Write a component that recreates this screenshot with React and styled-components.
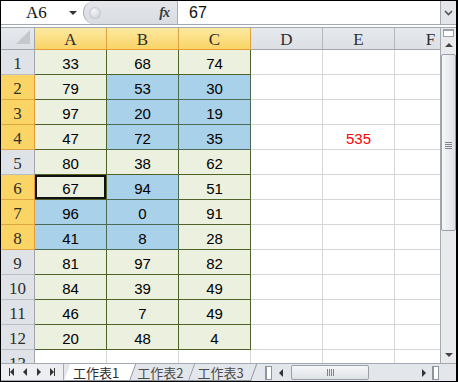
import React from "react";
import styled, { createGlobalStyle, css } from "styled-components";

const GlobalStyle = createGlobalStyle`
  html, body { margin: 0; padding: 0; background: #fff; }
  * { box-sizing: border-box; }
`;

const rows = [
  [33, 68, 74],
  [79, 53, 30],
  [97, 20, 19],
  [47, 72, 35],
  [80, 38, 62],
  [67, 94, 51],
  [96, 0, 91],
  [41, 8, 28],
  [81, 97, 82],
  [84, 39, 49],
  [46, 7, 49],
  [20, 48, 4],
];

const selectedRows = [2, 3, 4, 6, 7, 8];
const columns = ["A", "B", "C", "D", "E", "F"];

const isBlue = (r, c) =>
  (r >= 2 && r <= 4 && c >= 1 && c <= 2) ||
  (r >= 6 && r <= 8 && c <= 1 && !(r === 6 && c === 0));

export default function App() {
  return (
    <>
      <GlobalStyle />
      <Window>
        <FormulaBar>
          <NameBox>
            <NameText>A6</NameText>
            <DropTriangle />
          </NameBox>
          <FxBox>
            <Dimple />
            <Fx>fx</Fx>
          </FxBox>
          <FormulaInput>67</FormulaInput>
          <ExpandButton>
            <svg width="9" height="6" viewBox="0 0 9 6">
              <polyline points="1,1 4.5,4.5 8,1" fill="none" stroke="#555" strokeWidth="1.6" />
            </svg>
          </ExpandButton>
        </FormulaBar>
        <BarGap />
        <Main>
          <Sheet>
            <Grid>
              <CornerCell>
                <svg width="16" height="16" viewBox="0 0 16 16">
                  <polygon points="15,1 15,15 1,15" fill="#c4c8cd" />
                </svg>
              </CornerCell>
              {columns.map((col, i) => (
                <ColHead key={col} $selected={i < 3}>
                  {col}
                </ColHead>
              ))}
              {rows.map((vals, ri) => {
                const r = ri + 1;
                return (
                  <React.Fragment key={r}>
                    <RowHead $selected={selectedRows.includes(r)}>{r}</RowHead>
                    {columns.map((col, c) => {
                      const filled = c < 3;
                      return (
                        <Cell
                          key={col}
                          $tone={filled ? (isBlue(r, c) ? "blue" : "green") : "plain"}
                          $active={r === 6 && c === 0}
                        >
                          {filled ? vals[c] : r === 4 && c === 4 ? <Result>535</Result> : null}
                        </Cell>
                      );
                    })}
                  </React.Fragment>
                );
              })}
              <RowHead>13</RowHead>
              {columns.map((col) => (
                <Cell key={col} $tone="plain" />
              ))}
            </Grid>
          </Sheet>
          <VScroll>
            <SplitBox />
            <ArrowButton>
              <Triangle $dir="up" />
            </ArrowButton>
            <VThumb>
              <GripH>
                <span />
                <span />
                <span />
                <span />
              </GripH>
            </VThumb>
            <Track />
            <ArrowButton>
              <Triangle $dir="down" />
            </ArrowButton>
          </VScroll>
        </Main>
        <BottomBar>
          <NavBox>
            <NavButton>
              <Bar />
              <Triangle $dir="left" />
            </NavButton>
            <NavButton>
              <Triangle $dir="left" />
            </NavButton>
            <NavButton>
              <Triangle $dir="right" />
            </NavButton>
            <NavButton>
              <Triangle $dir="right" />
              <Bar />
            </NavButton>
          </NavBox>
          <TabStrip>
            <Tab $active $pl={9} $pr={11}>工作表1</Tab>
            <Tab $pl={7} $pr={6}>工作表2</Tab>
            <Tab $pl={8} $pr={8}>工作表3</Tab>
          </TabStrip>
          <HScroll>
            <TabSplit />
            <ArrowButton $h>
              <Triangle $dir="left" />
            </ArrowButton>
            <HThumb>
              <GripV>
                <span />
                <span />
                <span />
                <span />
              </GripV>
            </HThumb>
            <Track />
            <ArrowButton $h>
              <Triangle $dir="right" />
            </ArrowButton>
            <TabSplit />
          </HScroll>
          <Corner />
        </BottomBar>
      </Window>
    </>
  );
}

const Window = styled.div`
  width: 458px;
  height: 382px;
  border: 1px solid #000;
  border-right-width: 2px;
  display: flex;
  flex-direction: column;
  overflow: hidden;
  background: #fff;
`;

const FormulaBar = styled.div`
  height: 24px;
  display: flex;
  border-bottom: 1px solid #a3a9b0;
  background: #fff;
`;

const NameBox = styled.div`
  width: 82px;
  display: flex;
  align-items: center;
  padding-left: 25px;
  font-family: "Liberation Serif", serif;
  font-size: 17px;
  color: #111;
`;

const NameText = styled.span`
  flex: 1;
`;

const DropTriangle = styled.span`
  width: 0;
  height: 0;
  margin-right: 6px;
  border-left: 4px solid transparent;
  border-right: 4px solid transparent;
  border-top: 4px solid #333;
`;

const FxBox = styled.div`
  width: 95px;
  display: flex;
  align-items: center;
  justify-content: space-between;
  padding: 0 8px 0 5px;
  background: linear-gradient(#e4e6ea, #d9dce1);
  border: 1px solid #a3a9b0;
  border-right-color: #a8aeb5;
  border-top: none;
  border-bottom: none;
  border-radius: 12px 0 0 12px;
`;

const Dimple = styled.span`
  width: 12px;
  height: 12px;
  border-radius: 50%;
  background: radial-gradient(circle at 40% 35%, #f4f5f7, #c3c7cd);
  box-shadow: inset 0 0 0 1px #c7cbd0;
`;

const Fx = styled.span`
  font-family: "Liberation Serif", serif;
  font-style: italic;
  font-weight: bold;
  font-size: 14px;
  color: #3a3a3a;
  letter-spacing: -1px;
`;

const FormulaInput = styled.div`
  flex: 1;
  display: flex;
  align-items: center;
  padding-left: 11px;
  font-family: "Liberation Sans", Arial, sans-serif;
  font-size: 16px;
  color: #111;
`;

const ExpandButton = styled.div`
  width: 16px;
  display: flex;
  align-items: center;
  justify-content: center;
  background: #e2e5e9;
  border-left: 1px solid #a3a9b0;
`;

const BarGap = styled.div`
  height: 3px;
  border-bottom: 1px solid #a3a9b0;
  background: #fff;
`;

const Main = styled.div`
  height: 335px;
  display: flex;
`;

const Sheet = styled.div`
  flex: 1;
  overflow: hidden;
`;

const Grid = styled.div`
  display: grid;
  grid-template-columns: 34px repeat(6, 72px);
  grid-template-rows: 22px repeat(13, 25px);
  width: max-content;
`;

const headFont = css`
  font-family: "Liberation Serif", "DejaVu Serif", serif;
  font-size: 17px;
  color: #2e2e2e;
  display: flex;
  align-items: center;
  justify-content: center;
`;

const CornerCell = styled.div`
  background: linear-gradient(#e6e9ed, #dcdfe4);
  border-right: 1px solid #9ea4aa;
  border-bottom: 1px solid #9ea4aa;
  display: flex;
  align-items: flex-end;
  justify-content: flex-end;
  padding: 0 3px 4px 0;
`;

const ColHead = styled.div`
  ${headFont}
  padding-top: 2px;
  ${({ $selected }) =>
    $selected
      ? css`
          background: linear-gradient(#fde9a3, #f9d465);
          border-right: 1px solid #d9a142;
          border-bottom: 1px solid #e89a34;
        `
      : css`
          background: linear-gradient(#e6e9ed, #dcdfe4);
          border-right: 1px solid #b3b8be;
          border-bottom: 1px solid #9ea4aa;
        `}
`;

const RowHead = styled.div`
  ${headFont}
  padding-top: 4px;
  ${({ $selected }) =>
    $selected
      ? css`
          background: #fad565;
          border-right: 1px solid #e89a34;
          border-bottom: 1px solid #e0a646;
        `
      : css`
          background: #dfe2e6;
          border-right: 1px solid #9ea4aa;
          border-bottom: 1px solid #b9bec4;
        `}
`;

const toneStyles = {
  green: css`
    background: #ebf1de;
    border-right: 1px solid #4f6228;
    border-bottom: 1px solid #4f6228;
  `,
  blue: css`
    background: #a9d1e9;
    border-right: 1px solid #4b6a55;
    border-bottom: 1px solid #4b6a55;
  `,
  plain: css`
    background: #fff;
    border-right: 1px solid #d6d6d6;
    border-bottom: 1px solid #d6d6d6;
  `,
};

const Cell = styled.div`
  display: flex;
  align-items: center;
  justify-content: center;
  padding-top: 2px;
  font-family: "Liberation Sans", Arial, sans-serif;
  font-size: 15px;
  color: #000;
  ${({ $tone }) => toneStyles[$tone]}
  ${({ $active }) =>
    $active &&
    css`
      box-shadow: inset 0 0 0 2px #111;
    `}
`;

const Result = styled.span`
  color: #ff0000;
`;

const VScroll = styled.div`
  width: 16px;
  display: flex;
  flex-direction: column;
  background: #e8eaed;
  border-left: 1px solid #a3a9b0;
`;

const SplitBox = styled.div`
  height: 8px;
  margin: 1px 2px 0;
  background: #fff;
  border: 1px solid #9aa0a7;
  border-top-width: 2px;
`;

const ArrowButton = styled.div`
  display: flex;
  align-items: center;
  justify-content: center;
  flex: none;
  ${({ $h }) =>
    $h
      ? css`
          width: 16px;
        `
      : css`
          height: 16px;
        `}
`;

const triangles = {
  up: css`
    border-left: 4px solid transparent;
    border-right: 4px solid transparent;
    border-bottom: 4px solid #444;
  `,
  down: css`
    border-left: 4px solid transparent;
    border-right: 4px solid transparent;
    border-top: 4px solid #444;
  `,
  left: css`
    border-top: 4px solid transparent;
    border-bottom: 4px solid transparent;
    border-right: 4px solid #333;
  `,
  right: css`
    border-top: 4px solid transparent;
    border-bottom: 4px solid transparent;
    border-left: 4px solid #333;
  `,
};

const Triangle = styled.span`
  width: 0;
  height: 0;
  ${({ $dir }) => triangles[$dir]}
`;

const VThumb = styled.div`
  height: 177px;
  margin: 1px 0 0;
  flex: none;
  border: 1px solid #99a0a8;
  border-radius: 2px;
  background: linear-gradient(to right, #f6f7f9, #dde1e7);
  display: flex;
  align-items: center;
  justify-content: center;
  padding-top: 6px;
`;

const GripH = styled.div`
  display: flex;
  flex-direction: column;
  gap: 1px;
  span {
    width: 7px;
    height: 1px;
    background: #7d838b;
  }
`;

const Track = styled.div`
  flex: 1;
`;

const BottomBar = styled.div`
  height: 18px;
  display: flex;
  background: #e3e6ea;
`;

const NavBox = styled.div`
  width: 63px;
  display: flex;
  align-items: center;
  justify-content: space-around;
  padding: 0 3px;
  border: 1px solid #a3a9b0;
  border-left: none;
  background: #eceef1;
`;

const NavButton = styled.div`
  display: flex;
  align-items: center;
`;

const Bar = styled.span`
  width: 1px;
  height: 8px;
  background: #333;
`;

const TabStrip = styled.div`
  width: 200px;
  display: flex;
  overflow: hidden;
  border-top: 1px solid #a3a9b0;
`;

const Tab = styled.div`
  position: relative;
  display: flex;
  align-items: center;
  padding: 0 ${({ $pr }) => $pr}px 0 ${({ $pl }) => $pl}px;
  font-family: "Noto Sans CJK TC", "Noto Sans CJK SC", sans-serif;
  font-size: 13px;
  line-height: 1;
  color: ${({ $active }) => ($active ? "#2c2c2c" : "#4a4a4a")};
  z-index: ${({ $active }) => ($active ? 2 : 1)};
  margin-top: ${({ $active }) => ($active ? "-1px" : "0")};
  height: ${({ $active }) => ($active ? "18px" : "17px")};

  &::before {
    content: "";
    position: absolute;
    inset: 0;
    transform: skewX(-20deg);
    transform-origin: bottom left;
    background: ${({ $active }) => ($active ? "#fff" : "#e3e6ea")};
    border-right: 1px solid #8e959d;
    border-bottom: 1px solid #8e959d;
    z-index: -1;
  }
`;

const HScroll = styled.div`
  flex: 1;
  display: flex;
  align-items: stretch;
  border-top: 1px solid #a3a9b0;
  padding-left: 1px;
`;

const TabSplit = styled.div`
  width: 7px;
  margin: 2px 1px 1px 0;
  background: #fff;
  border: 1px solid #8e959d;
  border-left-width: 2px;
`;

const HThumb = styled.div`
  width: 78px;
  margin: 1px 0 1px 2px;
  border: 1px solid #99a0a8;
  border-radius: 2px;
  background: linear-gradient(#f6f7f9, #dde1e7);
  display: flex;
  align-items: center;
  justify-content: center;
`;

const GripV = styled.div`
  display: flex;
  gap: 1px;
  span {
    width: 1px;
    height: 7px;
    background: #7d838b;
  }
`;

const Corner = styled.div`
  width: 16px;
  background: #e3e6ea;
  border-top: 1px solid #a3a9b0;
`;
